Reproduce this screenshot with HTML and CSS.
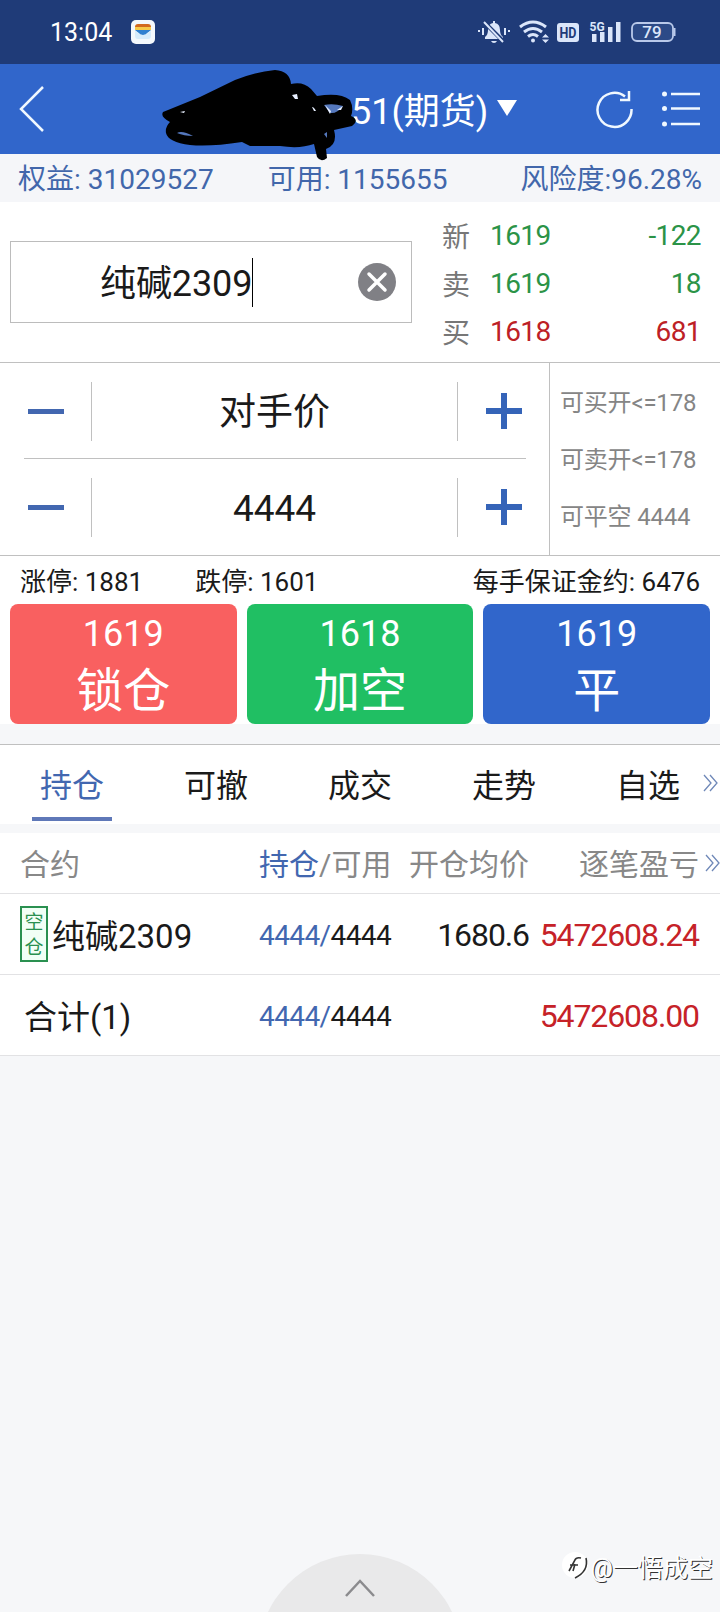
FILE: index.html
```
<!DOCTYPE html>
<html lang="zh-CN">
<head>
<meta charset="UTF-8">
<title>期货交易</title>

<link rel="stylesheet" href="styles.css">
</head>

<body>

<!-- 状态栏 -->
<div class="status-bar">
  <span class="time">13:04</span>
  <svg class="app-icon" width="24" height="24" viewBox="0 0 24 24">
    <rect width="24" height="24" rx="5" fill="#f4f8fc"/>
    <path d="M4 7q0-3 3-3h10q3 0 3 3z" fill="#d2691e"/>
    <path d="M4 7h16v3H4z" fill="#f7c948"/>
    <path d="M4 10h16l-3 2.500q-1 2.500-5 2.500t-5-2.500z" fill="#2f7fd0"/>
    <path d="M4 11l4 2q1 2 4 2t4-2l4-2v5q0 3-3 3H7q-3 0-3-3z" fill="#d6ebfb"/>
  </svg>
  <svg class="status-icons" width="200" height="26" viewBox="477 19 200 26" fill="#dbe6fa">
    <!-- 静音 -->
    <path d="M485 37q3-2 3-7 0-6 5-7v-2h2v2q5 1 5 7 0 5 3 7v2h-18zM491 41h6q-1 2-3 2t-3-2z"/>
    <path d="M484 22l20 20" stroke="#1f3b78" stroke-width="4"/>
    <path d="M484 22l19 20M479 30v2M483 28v7M505 28v7M509 30v2" stroke="#dbe6fa" stroke-width="2"/>
    <!-- wifi -->
    <g fill="none" stroke="#dbe6fa" stroke-width="3">
      <path d="M520 27q13-10 26 0M524 32q9-7 18 0M528 36.500q5-4 10 0"/>
    </g>
    <circle cx="533" cy="40.500" r="2"/>
    <path d="M542 37.500l3.500-3.500 3.500 3.500zM542 39.500h7l-3.500 3.500z"/>
    <!-- HD -->
    <rect x="557" y="23" width="22" height="19" rx="3"/>
    <text x="568" y="38" class="hd" textLength="17" lengthAdjust="spacingAndGlyphs">HD</text>
    <!-- 信号 -->
    <text x="589.500" y="30.500" class="net">5G</text>
    <path d="M592 34h4.500v8H592zM600 32h4.500v10H600zM608 27h4.500v15H608zM616 22h4.500v20H616z"/>
    <!-- 电池 -->
    <rect x="632" y="23" width="41" height="18" rx="5" fill="#2c4a87" stroke="#b9c9ea" stroke-width="1.800"/>
    <path d="M674.500 28v8" stroke="#b9c9ea" stroke-width="2"/>
    <text x="652" y="38" class="battery">79</text>
  </svg>
</div>

<!-- 标题栏 -->
<div class="header">
  <svg class="back" width="28" height="50" viewBox="0 0 28 50">
    <path d="M25 3L3 25l22 22"/>
  </svg>
  <div class="account">51(期货)<i class="arrow"></i></div>
  <svg class="refresh" width="38" height="40" viewBox="0 0 38 40">
    <path d="M35.500 20A17 17 0 1 1 29 7.500"/>
    <path d="M33 2v9h-9"/>
  </svg>
  <svg class="menu" width="40" height="38" viewBox="0 0 40 38">
    <path d="M10 4h29M10 18.500h29M10 34h29"/>
    <circle cx="3.500" cy="4" r="2.500"/>
    <circle cx="3.500" cy="18.500" r="2.500"/>
    <circle cx="3.500" cy="34" r="2.500"/>
  </svg>

  <!-- 涂抹 -->
  <svg class="scribble" width="200" height="94" viewBox="160 68 200 94">
    <path d="M168 110L200 97 235 80Q255 72 275 70 290 71 291 84 303 81 311 89L317 96Q340 92 350 100 354 108 351 116 360 120 352 126L334 130Q338 145 326 149L327 158Q321 163 317 157L314 144Q300 149 280 146L250 146 242 142Q210 147 190 145 168 142 166 133 165 127 170 122 160 117 163 112z"/>
    <path class="hole" d="M177 133q5-3 16 3-9 0-16-3z"/>
    <path class="hole" d="M324 105l6 8q7 1 13-7-10-3-19-1z"/>
    <path class="light" d="M325 105l6 6-1 3zM337 110l6-4-2 4zM312 107q2 0 4 4h-2zM292 95l5-1 1 5h-3z"/>
    <path class="hole" d="M324 134l3-2v6z"/>
    <path class="light" d="M180 112l5-1-1 2z"/>
  </svg>
</div>

<!-- 资金 -->
<div class="funds">
  <span>权益: 31029527</span>
  <span class="available">可用: 1155655</span>
  <span class="risk">风险度:96.28%</span>
</div>

<!-- 合约与报价 -->
<div class="quote">
  <div class="contract">
    <span class="code">纯碱2309</span>
    <svg class="clear" width="38" height="38" viewBox="0 0 38 38">
      <circle cx="19" cy="19" r="19" fill="#808085"/>
      <path d="M11 11l16 16M27 11L11 27" stroke="#fff" stroke-width="3.500" stroke-linecap="round"/>
    </svg>
  </div>
  <div class="prices">
    <div class="price green"><label>新</label><span>1619</span><b>-122</b></div>
    <div class="price green"><label>卖</label><span>1619</span><b>18</b></div>
    <div class="price red"><label>买</label><span>1618</span><b>681</b></div>
  </div>
</div>

<!-- 下单 -->
<div class="order">
  <div class="steppers">
    <div class="stepper">
      <div class="minus"></div>
      <div class="value">对手价</div>
      <div class="plus"></div>
    </div>
    <div class="stepper">
      <div class="minus"></div>
      <div class="value">4444</div>
      <div class="plus"></div>
    </div>
  </div>
  <div class="hints">
    <div>可买开&lt;=178</div>
    <div>可卖开&lt;=178</div>
    <div>可平空 4444</div>
  </div>
</div>

<div class="limits">
  <span>涨停: 1881</span>
  <span class="down">跌停: 1601</span>
  <span class="margin">每手保证金约: 6476</span>
</div>

<div class="buttons">
  <div class="btn lock"><span>1619</span><strong>锁仓</strong></div>
  <div class="btn short"><span>1618</span><strong>加空</strong></div>
  <div class="btn flat"><span>1619</span><strong>平</strong></div>
</div>

<!-- 标签 -->
<div class="tabs">
  <div class="tab active">持仓</div>
  <div class="tab">可撤</div>
  <div class="tab">成交</div>
  <div class="tab">走势</div>
  <div class="tab">自选</div>
  <svg class="more" width="16" height="18" viewBox="0 0 16 18"><path d="M1 1l7 8-7 8M7 1l7 8-7 8"/></svg>
</div>

<!-- 持仓列表 -->
<div class="positions">
  <div class="row head">
    <div class="name">合约</div>
    <div class="qty"><em>持仓</em>/可用</div>
    <div class="avg">开仓均价</div>
    <div class="profit">逐笔盈亏</div>
    <svg class="more" width="16" height="18" viewBox="0 0 16 18"><path d="M1 1l7 8-7 8M7 1l7 8-7 8"/></svg>
  </div>
  <div class="row">
    <div class="name"><span class="badge">空<br>仓</span>纯碱2309</div>
    <div class="qty"><em>4444/</em>4444</div>
    <div class="avg">1680.6</div>
    <div class="profit">5472608.24</div>
  </div>
  <div class="row">
    <div class="name total">合计(1)</div>
    <div class="qty"><em>4444/</em>4444</div>
    <div class="avg"></div>
    <div class="profit">5472608.00</div>
  </div>
</div>

<!-- 底部 -->
<div class="drawer">
  <svg width="204" height="58" viewBox="0 0 204 58">
    <circle cx="102" cy="102" r="102"/>
    <path d="M88 42l14-15 14 15"/>
  </svg>
</div>

<div class="watermark">
  <svg width="30" height="30" viewBox="0 0 30 30">
    <circle cx="14" cy="14" r="13" fill="#fff"/>
    <path d="M8 20l6-11q1-3 6-2M9 14h8M25 7q3 13-11 20M14 13l-2 7" fill="none" stroke="#333" stroke-width="1.600"/>
  </svg>
  <span>@一悟成空</span>
</div>

</body>
</html>
```
FILE: styles.css
```
* { box-sizing: border-box; }

body {
  margin: 0;
  width: 720px;
  height: 1612px;
  position: relative;
  overflow: hidden;
  font-family: Roboto, "Noto Sans CJK SC", sans-serif;
  background: #f6f7f9;
  color: #1a1a1a;
}

em, i { font-style: normal; }

/* 状态栏 */
.status-bar {
  height: 64px;
  background: #1f3b78;
  display: flex;
  align-items: center;
  padding: 0 43px 0 50px;
  color: #fff;
}
.time { width: 81px; font-size: 25px; }
.status-icons { margin-left: auto; }
.hd, .net, .battery { font-family: Roboto, sans-serif; }
.hd {
  font-size: 15px;
  font-weight: 700;
  fill: #1f3b78;
  text-anchor: middle;
}
.net { font-size: 12px; font-weight: 700; }
.battery { font-size: 17px; font-weight: 500; text-anchor: middle; }

/* 标题栏 */
.header {
  position: relative;
  height: 90px;
  background: #3166cb;
  display: flex;
  align-items: center;
  padding: 0 19px 0 18px;
  color: #fff;
}
.header svg { fill: none; stroke: #f0f8ff; stroke-width: 2.5; }
.account {
  display: flex;
  align-items: center;
  margin-left: 305px;
  padding-bottom: 2px;
  font-size: 36px;
}
.arrow {
  margin-left: 9px;
  border: 10px solid transparent;
  border-top: 16px solid #fff;
  border-bottom: 0;
}
.refresh { margin-left: auto; }
.menu { margin-left: 27px; }
.menu circle { fill: #f0f8ff; stroke: none; }
.header .scribble {
  position: absolute;
  left: 160px;
  top: 4px;
  z-index: 2;
  fill: #000;
  stroke: none;
}
.scribble .hole { fill: #5578bd; }
.scribble .light { fill: #e8f0ff; }

/* 资金 */
.funds {
  height: 48px;
  background: #f5f6f9;
  display: flex;
  align-items: center;
  padding: 0 18px 2px;
  font-size: 28px;
  color: #4267ab;
}
.available { margin-left: 54px; }
.risk { margin-left: auto; }

/* 报价 */
.quote {
  height: 161px;
  display: flex;
  background: #fff;
  padding: 0 19px 0 10px;
  border-bottom: 1px solid #c0c0c0;
}
.contract {
  width: 402px;
  height: 82px;
  margin-top: 39px;
  border: 1px solid #bcbcbc;
  display: flex;
  align-items: center;
  padding: 0 15px 0 89px;
  font-size: 36px;
}
.code {
  height: 49px;
  line-height: 53px;
  margin-right: -1px;
  letter-spacing: -0.1px;
  border-right: 1px solid #000;
}
.clear { margin-left: auto; }
.prices { flex: 1; margin-left: 30px; padding-top: 9px; }
.price {
  height: 48px;
  display: flex;
  align-items: center;
  font-size: 28px;
  letter-spacing: -0.6px;
}
.price label { width: 48px; color: #777; }
.price b { margin-left: auto; font-weight: 400; }
.green { color: #2b9347; }
.red { color: #bd2025; }

/* 下单 */
.order {
  height: 193px;
  display: flex;
  background: #fff;
  border-bottom: 1px solid #c0c0c0;
}
.steppers {
  width: 550px;
  padding: 0 23px 0 24px;
  border-right: 1px solid #c0c0c0;
}
.stepper {
  height: 96px;
  display: flex;
  align-items: center;
}
.stepper:first-child { border-bottom: 1px solid #c0c0c0; padding-top: 1px; }
.value {
  flex: 1;
  height: 59px;
  line-height: 62px;
  border: solid #c0c0c0;
  border-width: 0 1px;
  text-align: center;
  font-size: 37px;
}
.minus {
  width: 36px;
  height: 5px;
  margin: 0 27px 0 4px;
  background: #4267b0;
}
.plus {
  width: 36px;
  height: 36px;
  margin: 0 4px 0 28px;
  background:
    linear-gradient(#3564b8, #3564b8) center / 36px 6px no-repeat,
    linear-gradient(#3564b8, #3564b8) center / 6px 36px no-repeat;
}
.hints {
  padding: 12px 0 0 10px;
  font-size: 24px;
  letter-spacing: -0.2px;
  color: #858585;
}
.hints div { height: 57px; line-height: 57px; }

.limits {
  height: 48px;
  display: flex;
  align-items: center;
  background: #fff;
  padding: 0 20px 1px;
  font-size: 26px;
}
.down { margin-left: 52px; }
.margin { margin-left: auto; }

.buttons {
  height: 120px;
  display: grid;
  grid-template-columns: 1fr 1fr 1fr;
  gap: 10px;
  padding: 0 10px;
  background: #fff;
}
.btn {
  border-radius: 8px;
  display: flex;
  flex-direction: column;
  align-items: center;
  color: #fff;
}
.btn span { font-size: 36px; line-height: 60px; }
.btn strong { font-size: 47px; line-height: 54px; font-weight: 400; }
.lock { background: #f96060; }
.short { background: #20bf63; }
.flat { background: #3166cb; }

/* 标签 */
.tabs {
  position: relative;
  height: 80px;
  margin-top: 20px;
  border-top: 1px solid #c0c0c0;
  background: #fff;
  display: grid;
  grid-template-columns: repeat(5, 144px);
}
.tab {
  text-align: center;
  font-size: 32px;
  line-height: 82px;
}
.active { color: #4267b0; }
.active::after {
  content: "";
  display: block;
  width: 80px;
  height: 4px;
  margin: -10px auto 0;
  background: #5f78b8;
}
.more {
  position: absolute;
  right: 1px;
  top: 29px;
  fill: none;
  stroke: #6f88b8;
  stroke-width: 1.3;
}

/* 持仓列表 */
.positions { margin-top: 9px; background: #fff; }
.row {
  position: relative;
  height: 81px;
  display: grid;
  grid-template-columns: 238px 132px 138px 170px;
  align-items: center;
  padding-left: 21px;
  border-bottom: 1px solid #e2e2e4;
  font-size: 32px;
  letter-spacing: -1.1px;
}
.head {
  height: 61px;
  padding-bottom: 3px;
  color: #888;
  letter-spacing: 0;
}
.row em { color: #4267b0; }
.name {
  display: flex;
  align-items: center;
  font-size: 33px;
  letter-spacing: 0;
}
.head > div { font-size: 30px; }
.head .name { margin-left: -1px; }
.total { padding-left: 3px; }
.badge {
  width: 28px;
  height: 56px;
  margin: 0 4px 0 -1px;
  border: 2px solid #2a9050;
  color: #2a9050;
  background: #f1fff6;
  font-size: 19px;
  line-height: 25px;
  padding-top: 2px;
  text-align: center;
}
.qty {
  padding-top: 3px;
  font-size: 28px;
  letter-spacing: -0.6px;
  white-space: nowrap;
}
.head .qty { padding-top: 0; letter-spacing: 0; }
.avg, .profit { padding-top: 1px; text-align: right; }
.profit { color: #c62228; }
.head .profit { color: #888; }
.head .more { top: 21px; right: -1px; }

/* 底部 */
.drawer {
  position: absolute;
  left: 258px;
  bottom: 0;
  height: 58px;
}
.drawer circle { fill: #e9e9ea; }
.drawer path { fill: none; stroke: #8b8b8e; stroke-width: 2.5; }

.watermark {
  position: absolute;
  right: 7px;
  top: 1548px;
  display: flex;
  align-items: center;
  font-size: 25px;
  color: #fff;
  text-shadow: 1px 1px 0 #333;
}
```
